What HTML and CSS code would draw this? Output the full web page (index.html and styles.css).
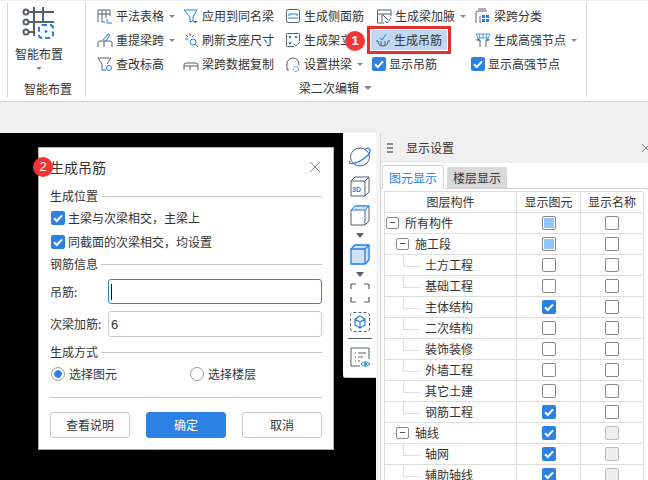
FILE: index.html
```html
<!DOCTYPE html>
<html lang="zh">
<head>
<meta charset="utf-8">
<title>生成吊筋</title>
<link rel="stylesheet" href="styles.css">
</head>
<body>
<svg class="defs" width="0" height="0">
  <symbol id="tick" viewBox="0 0 14 14"><path d="M3 7.2l2.8 2.8L11 4.4" fill="none" stroke="#fff" stroke-width="2"/></symbol>
</svg>
<header class="ribbon">
  <section class="group-large">
    <svg class="large-icon" width="34" height="36" viewBox="0 0 34 36">
      <g fill="none" stroke="#565e6c" stroke-width="2">
        <path d="M4 6h28M4 16h28M4 26h8M12 1v29M21 1v15"/>
      </g>
      <g fill="#fff" stroke="#565e6c" stroke-width="2"><circle cx="4" cy="6" r="2.500"/><circle cx="4" cy="16" r="2.500"/><circle cx="4" cy="26" r="2.500"/></g>
      <rect x="17" y="19" width="14" height="13" rx="3" fill="#fff" stroke="#1e7fea" stroke-width="2" stroke-dasharray="5 3"/>
      <circle cx="24" cy="25.500" r="1.400" fill="#1e7fea"/>
    </svg>
    <div class="large-name">智能布置</div>
    <i class="caret caret-center"></i>
    <div class="group-label">智能布置</div>
  </section>
  <section class="group-main">
    <div class="cols">
      <div class="col c1">
        <div class="item"><svg class="ic" viewBox="0 0 16 16"><path d="M1 14V2h12v6M1 6h12M5 2v12h3M9 2v8" fill="none" stroke="#565e6c"/><path d="M10 15h5M10 11v4" fill="none" stroke="#1e7fea"/></svg><span>平法表格</span><i class="caret"></i></div>
        <div class="item"><svg class="ic" viewBox="0 0 16 16"><path d="M1 15v-4q0-2 2-2h10q2 0 2 2v4M7 9v6" fill="none" stroke="#565e6c"/><path d="M6 8l5-6 2 1-4 6" fill="none" stroke="#1e7fea"/></svg><span>重提梁跨</span><i class="caret"></i></div>
        <div class="item"><svg class="ic" viewBox="0 0 16 16"><path d="M1 2h13l-4 6M1 2l4 6v6h4" fill="none" stroke="#565e6c"/><circle cx="12" cy="12" r="2.500" fill="none" stroke="#1e7fea"/></svg><span>查改标高</span></div>
      </div>
      <div class="col c2">
        <div class="item"><svg class="ic" viewBox="0 0 16 16"><path d="M1 2h13l-4 7v4l-3 1V9z" fill="none" stroke="#1e7fea"/><path d="M10 13h5l-2.500 2z" fill="#565e6c"/></svg><span>应用到同名梁</span></div>
        <div class="item"><svg class="ic" viewBox="0 0 16 16"><path d="M2 7h3M7 1v3M3 3l2 2M11 3L9 5" fill="none" stroke="#565e6c"/><circle cx="10" cy="10" r="3" fill="none" stroke="#1e7fea"/><path d="M12 12l3 3" stroke="#1e7fea"/></svg><span>刷新支座尺寸</span></div>
        <div class="item"><svg class="ic" viewBox="0 0 16 16"><path d="M1 14v-5M15 14V9M1 9q0-2 2-2h10q2 0 2 2M1 10h14M7 10v4" fill="none" stroke="#565e6c"/></svg><span>梁跨数据复制</span></div>
      </div>
      <div class="col c3">
        <div class="item"><svg class="ic" viewBox="0 0 16 16"><rect x="1.500" y="1.500" width="13" height="13" rx="2" fill="none" stroke="#565e6c"/><path d="M4 8V6h8v2M3 10h10" fill="none" stroke="#1e7fea"/></svg><span>生成侧面筋</span></div>
        <div class="item"><svg class="ic" viewBox="0 0 16 16"><path d="M9 14.500H2.500q-1 0-1-1v-11q0-1 1-1h11q1 0 1 1V9" fill="none" stroke="#565e6c"/><g fill="#1e7fea"><circle cx="5" cy="5" r="1.200"/><circle cx="11" cy="5" r="1.200"/><circle cx="5" cy="11" r="1.200"/></g><path d="M9 12l2 2 4-4" fill="none" stroke="#1e7fea"/></svg><span>生成架立筋</span></div>
        <div class="item"><svg class="ic" viewBox="0 0 16 16"><path d="M2 14V8a6 6 0 0 1 12 0v1M2 14h2" fill="none" stroke="#565e6c"/><circle cx="11" cy="13" r="2.500" fill="none" stroke="#1e7fea" stroke-dasharray="2 1"/></svg><span>设置拱梁</span><i class="caret"></i></div>
      </div>
      <div class="col c4">
        <div class="item"><svg class="ic" viewBox="0 0 16 16"><path d="M8 15H1.500V2H15v6M1.500 6H15M6 6v8" fill="none" stroke="#565e6c"/><path d="M9 13l2 2 4-5" fill="none" stroke="#1e7fea"/><path d="M7 7l5 5" stroke="#565e6c"/></svg><span>生成梁加腋</span><i class="caret"></i></div>
        <div class="hilite">
          <div class="hilite-inner"><svg class="ic" viewBox="0 0 16 16"><path d="M1 9h2q0 5 5 5t5-5h2M6 14V9M10 14V9" fill="none" stroke="#565e6c"/><path d="M5 6l2 2 4-6" fill="none" stroke="#1e7fea"/></svg><span>生成吊筋</span></div>
        </div>
        <div class="item check-item"><svg class="cb"><use href="#tick"/></svg><span>显示吊筋</span></div>
      </div>
      <div class="col c5">
        <div class="item"><svg class="ic" viewBox="0 0 16 16"><path d="M1 15V5q0-2 2-2h9M3 1h8M5 8v7" fill="none" stroke="#565e6c"/><g fill="#1e7fea"><rect x="7" y="7" width="3" height="3"/><rect x="11" y="7" width="3" height="3"/><rect x="7" y="11" width="3" height="3"/><rect x="11" y="11" width="3" height="3"/></g></svg><span>梁跨分类</span></div>
        <div class="item"><svg class="ic" viewBox="0 0 16 16"><path d="M3 6v2h2v7M13 6v2h-2v7M1 8h4M11 8h4" fill="none" stroke="#565e6c"/><path d="M1 2h14l-2 4H3zM4 2l1 4M8 2v4M12 2l-1 4" fill="none" stroke="#1e7fea" stroke-width=".8"/></svg><span>生成高强节点</span><i class="caret"></i></div>
        <div class="item check-item"><svg class="cb"><use href="#tick"/></svg><span>显示高强节点</span></div>
      </div>
    </div>
    <div class="group-label main-label">梁二次编辑<i class="caret caret-wide"></i></div>
    <b class="badge badge-one">1</b>
  </section>
</header>
<div class="band"></div>
<main class="workspace">
  <div class="canvas">
    <section class="dialog">
      <b class="badge badge-two">2</b>
      <div class="dlg-title"><span>生成吊筋</span><svg class="dlg-close" width="12" height="12" viewBox="0 0 12 12"><path d="M1 1l10 10M11 1L1 11" stroke="#888" fill="none"/></svg></div>
      <div class="legend"><span>生成位置</span></div>
      <label class="dlg-check"><svg class="cb"><use href="#tick"/></svg>主梁与次梁相交，主梁上</label>
      <label class="dlg-check"><svg class="cb"><use href="#tick"/></svg>同截面的次梁相交，均设置</label>
      <div class="legend"><span>钢筋信息</span></div>
      <div class="field first-field"><span class="field-name">吊筋:</span><div class="input focus"><i class="cursor"></i></div></div>
      <div class="field"><span class="field-name">次梁加筋:</span><div class="input">6</div></div>
      <div class="legend legend-mode"><span>生成方式</span></div>
      <div class="radios">
        <div class="radio-item"><i class="radio on"></i>选择图元</div>
        <div class="radio-item"><i class="radio"></i>选择楼层</div>
      </div>
      <div class="rule"></div>
      <div class="buttons">
        <div class="btn">查看说明</div>
        <div class="btn primary">确定</div>
        <div class="btn">取消</div>
      </div>
    </section>
    <nav class="tools">
      <svg width="24" height="22" viewBox="0 0 24 22"><ellipse cx="12" cy="11" rx="9.500" ry="9" fill="#fff" stroke="#565e6c"/><path d="M2 15C0 19 6 18 12 15s11-8 10-11c-.5-2-3-2-5-1" fill="none" stroke="#1e7fea" stroke-width="1.300"/></svg>
      <svg width="22" height="22" viewBox="0 0 22 22"><path d="M2 6l4-4h14v15l-4 4H2zM2 6h14v15M16 6l4-4" fill="none" stroke="#565e6c"/><text x="3" y="17" class="svg-3d">3D</text></svg>
      <svg width="22" height="22" viewBox="0 0 22 22"><path d="M2 6l4-4h14v15l-4 4H2zM16 6v15" fill="none" stroke="#565e6c"/><path d="M2 6l4-4h14l-4 4z" fill="#cfe2f8" stroke="#1e7fea"/></svg>
      <i class="tool-caret"></i>
      <svg width="22" height="22" viewBox="0 0 22 22"><path d="M2 6l4-4h14v15l-4 4H2z" fill="#cfe2f8" stroke="#1e7fea" stroke-width="1.300"/><path d="M2 6h14v15M16 6l4-4" fill="none" stroke="#1e7fea" stroke-width="1.300"/></svg>
      <i class="tool-caret"></i>
      <svg width="22" height="22" viewBox="0 0 22 22"><path d="M2 7V3q0-1 1-1h4M15 2h4q1 0 1 1v4M20 15v4q0 1-1 1h-4M7 20H3q-1 0-1-1v-4" fill="none" stroke="#565e6c" stroke-width="1.200"/></svg>
      <svg width="22" height="22" viewBox="0 0 22 22"><rect x="1.500" y="1.500" width="19" height="19" rx="3" fill="none" stroke="#565e6c" stroke-dasharray="3 2"/><path d="M11 5l5 3v6l-5 3-5-3V8zM6 8l5 3 5-3M11 11v6" fill="none" stroke="#1e7fea" stroke-width="1.200"/></svg>
      <hr class="tool-rule">
      <svg width="22" height="22" viewBox="0 0 22 22"><path d="M11 20H2V2h18v11" fill="none" stroke="#565e6c"/><path d="M6 7h1M9 7h8M6 11h1M9 11h5M6 15h1M9 15h2" stroke="#565e6c"/><path d="M12 18q4.500-4.500 9 0q-4.500 4.500-9 0z" fill="#fff" stroke="#1e7fea"/><circle cx="16.500" cy="18" r="1.500" fill="#1e7fea"/></svg>
    </nav>
  </div>
  <aside class="side">
    <div class="panel">
      <div class="panel-head">
        <i class="grip"></i><span class="panel-title">显示设置</span>
        <svg class="panel-close" width="10" height="10" viewBox="0 0 10 10"><path d="M1 1l8 8M9 1L1 9" stroke="#888" fill="none"/></svg>
      </div>
      <div class="tabs"><div class="tab active">图元显示</div><div class="tab">楼层显示</div></div>
      <div class="grid">
        <div class="row head"><div class="cell">图层构件</div><div class="cell">显示图元</div><div class="cell">显示名称</div></div>
        <div class="row"><div class="cell tree"><i class="minus"></i>所有构件</div><div class="cell"><i class="box part"></i></div><div class="cell"><i class="box"></i></div></div>
        <div class="row"><div class="cell tree l1"><i class="minus"></i>施工段</div><div class="cell"><i class="box part"></i></div><div class="cell"><i class="box"></i></div></div>
        <div class="row"><div class="cell tree l2">土方工程</div><div class="cell"><i class="box"></i></div><div class="cell"><i class="box"></i></div></div>
        <div class="row"><div class="cell tree l2">基础工程</div><div class="cell"><i class="box"></i></div><div class="cell"><i class="box"></i></div></div>
        <div class="row"><div class="cell tree l2">主体结构</div><div class="cell"><svg class="cb"><use href="#tick"/></svg></div><div class="cell"><i class="box"></i></div></div>
        <div class="row"><div class="cell tree l2">二次结构</div><div class="cell"><i class="box"></i></div><div class="cell"><i class="box"></i></div></div>
        <div class="row"><div class="cell tree l2">装饰装修</div><div class="cell"><i class="box"></i></div><div class="cell"><i class="box"></i></div></div>
        <div class="row"><div class="cell tree l2">外墙工程</div><div class="cell"><i class="box"></i></div><div class="cell"><i class="box"></i></div></div>
        <div class="row"><div class="cell tree l2">其它土建</div><div class="cell"><i class="box"></i></div><div class="cell"><i class="box"></i></div></div>
        <div class="row"><div class="cell tree l2 last">钢筋工程</div><div class="cell"><svg class="cb"><use href="#tick"/></svg></div><div class="cell"><i class="box"></i></div></div>
        <div class="row"><div class="cell tree l1"><i class="minus"></i>轴线</div><div class="cell"><svg class="cb"><use href="#tick"/></svg></div><div class="cell"><i class="box off"></i></div></div>
        <div class="row"><div class="cell tree l2">轴网</div><div class="cell"><svg class="cb"><use href="#tick"/></svg></div><div class="cell"><i class="box off"></i></div></div>
        <div class="row"><div class="cell tree l2 last">辅助轴线</div><div class="cell"><svg class="cb"><use href="#tick"/></svg></div><div class="cell"><i class="box off"></i></div></div>
      </div>
    </div>
  </aside>
</main>
</body>
</html>
```

FILE: styles.css
```css
* { box-sizing: border-box; }
html, body { margin: 0; height: 100%; }
body {
  width: 648px; height: 480px; overflow: hidden;
  display: flex; flex-direction: column;
  background: #000; color: #333;
  font: 12px/1 "Noto Sans CJK SC", "Noto Sans", sans-serif;
}
i { display: block; font-style: normal; }
.defs { position: absolute; }

/* ribbon */
.ribbon {
  height: 102px; flex: none; display: flex;
  background: #fff; border-top: 1px solid #f0f0f0; border-bottom: 1px solid #d6d6d6;
  padding-left: 7px;
}
.group-large {
  width: 79px; height: 94px; margin-top: 2px;
  border-left: 1px solid #d8d8d8; border-right: 1px solid #d8d8d8;
  display: flex; flex-direction: column;
  position: relative;
}
.large-icon { margin: 3px 0 0 14px; }
.large-name { margin: 5px 0 0 7px; line-height: 14px; }
.group-label { line-height: 14px; }
.group-large .group-label { margin: 12px 0 0 16px; }
.caret { width: 0; height: 0; border: 3px solid transparent; border-top: 3px solid #888; border-bottom: 0; margin-left: 5px; }
.caret.caret-center { margin: 6px 0 0 28px; }
.group-main {
  width: 501px; height: 94px; margin-top: 2px; padding-left: 11px;
  border-right: 1px solid #d8d8d8;
  position: relative;
}
.cols { display: flex; height: 78px; padding-top: 1px; }
.col { display: flex; flex-direction: column; }
.c1 { width: 86px; }
.c2 { width: 102px; }
.c3 { width: 91px; }
.c4 { width: 99px; }
.item { height: 24px; display: flex; align-items: center; white-space: nowrap; }
.item > span, .hilite-inner > span { line-height: 14px; }
.ic { width: 16px; height: 16px; flex: none; margin-right: 3px; }
.cb { width: 14px; height: 14px; flex: none; background: #2e81e4; border-radius: 2px; display: block; }
.check-item { margin-left: -4px; }
.check-item .cb { margin-right: 3px; }
.hilite {
  height: 28px; width: 84px; margin: -2px 0 -2px -9px;
  border: 3px solid #e5302f; padding: 1px;
  display: flex;
}
.hilite-inner { flex: 1; background: #c0d8f2; border-radius: 2px; display: flex; align-items: center; padding-left: 4px; white-space: nowrap; }
.main-label { display: flex; align-items: center; margin-left: 202px; }
.caret-wide { border-width: 4px; border-top-color: #888; border-bottom: 0; margin-left: 5px; }
.badge {
  position: absolute; width: 20px; height: 20px; border-radius: 50%;
  background: #f43534; color: #fff; font: bold 13px/20px "Liberation Sans", sans-serif; text-align: center;
}
.badge-one { left: 259px; top: 28px; }
.badge-two { left: -6px; top: 9px; font-weight: normal; }

.band { height: 31px; flex: none; background: #f0f0f0; }

/* workspace */
.workspace { flex: 1; display: flex; min-height: 0; }
.canvas { width: 376px; flex: none; background: #000; position: relative; }
.dialog {
  position: absolute; left: 38px; top: 14px; width: 296px; height: 303px;
  background: #fff; border: 1px solid #b0b0b0;
  padding: 0 11px;
  display: flex; flex-direction: column;
}
.dlg-title { height: 40px; display: flex; align-items: center; justify-content: space-between; font-size: 14px; padding-bottom: 3px; flex: none; }
.dlg-close { margin-right: 1px; }
.legend { display: flex; align-items: center; gap: 3px; height: 16px; margin-bottom: 2px; flex: none; }
.legend::after { content: ""; flex: 1; height: 1px; background: #c8c8c8; }
.dlg-check { display: flex; align-items: center; gap: 3px; height: 24px; padding-left: 1px; flex: none; }
.dlg-check + .legend { margin-top: 2px; }
.field { display: flex; align-items: center; margin-top: 7px; flex: none; }
.first-field { margin-top: 5px; }
.field-name { width: 58px; flex: none; }
.input {
  width: 214px; height: 26px; border: 1px solid #c8c8c8; border-radius: 3px;
  display: flex; align-items: center; padding-left: 2px; font-family: "Liberation Sans", sans-serif; font-size: 13px;
}
.input.focus { border-color: #2e81e4; height: 25px; }
.cursor { width: 1px; height: 16px; background: #111; }
.legend-mode { margin-top: 7px; }
.radios { display: flex; height: 24px; align-items: center; padding-left: 1px; flex: none; }
.radio-item { display: flex; align-items: center; gap: 4px; width: 139px; flex: none; }
.radio { width: 14px; height: 14px; border-radius: 50%; border: 1px solid #999; background: #fff; flex: none; }
.radio.on { background: radial-gradient(circle, #2e81e4 0 3.500px, #fff 4px); }
.rule { height: 1px; background: #c8c8c8; margin-top: 11px; flex: none; }
.buttons { display: flex; justify-content: space-between; margin-top: 14px; flex: none; }
.btn { width: 80px; height: 26px; border: 1px solid #c8c8c8; border-radius: 3px; display: flex; align-items: center; justify-content: center; }
.btn.primary { background: #2e81e4; border-color: #2e81e4; color: #fff; }

.tools {
  position: absolute; left: 343px; top: 0; width: 33px; height: 245px;
  background: #fff; border-radius: 0 0 0 3px; border-bottom: 1px solid #ccc;
  display: flex; flex-direction: column; align-items: center; padding-top: 13px;
}
.tools svg { flex: none; margin-bottom: 7px; }
.svg-3d { font: bold 7px "Liberation Sans", sans-serif; fill: #1e7fea; }
.tool-caret { width: 0; height: 0; border: 4px solid transparent; border-top: 5px solid #565e6c; border-bottom: 0; margin-bottom: 5px; flex: none; }
.tool-rule { width: 24px; height: 1px; margin: -2px 0 7px; border: 0; background: #565e6c; flex: none; }

/* side panel */
.side { flex: 1; background: #f4f4f4; padding-left: 4px; min-width: 0; }
.panel { height: 100%; background: #fff; border-left: 1px solid #d4d4d4; overflow: hidden; }
.panel-head { height: 30px; background: #f0f0f0; display: flex; align-items: center; padding-left: 6px; position: relative; }
.grip {
  width: 6px; height: 12px; margin-right: 13px;
  background: radial-gradient(circle, #888 0 1.200px, transparent 1.500px) 0 0 / 3px 4px;
}
.panel-title { line-height: 14px; }
.panel-close { position: absolute; left: 260px; top: 10px; }
.tabs { display: flex; height: 26px; gap: 3px; padding: 2px 0 0 1px; border-bottom: 1px solid #d4d4d4; align-items: flex-end; }
.tab { width: 60px; height: 21px; background: #d8d8d8; border-radius: 3px 3px 0 0; display: flex; align-items: center; justify-content: center; }
.tab.active { width: 62px; height: 24px; background: #fff; color: #2e81e4; border: 1px solid #d4d4d4; border-bottom: 0; margin-bottom: -1px; }
.grid { margin: 2px 0 0 3px; width: 259px; border-top: 1px solid #ddd; border-left: 1px solid #ddd; }
.row { display: grid; grid-template-columns: 132px 64px 63px; height: 21px; }
.cell {
  border-right: 1px solid #ddd; border-bottom: 1px solid #ddd;
  display: flex; align-items: center; justify-content: center; position: relative; white-space: nowrap;
}
.cell > .cb { width: 14px; height: 14px; }
.tree { justify-content: flex-start; padding-left: 1px; }
.tree.l1 { padding-left: 11px; }
.tree.l2 { padding-left: 40px; }
.minus { width: 13px; height: 12px; border: 1px solid #8a8a8a; border-radius: 2px; margin-right: 6px; position: relative; flex: none; }
.minus::after { content: ""; position: absolute; left: 3px; top: 4px; width: 5px; height: 1px; background: #555; }
.l1::before { content: ""; position: absolute; left: 8px; top: 10px; width: 3px; height: 1px; background: #ddd; }
.l2::before { content: ""; position: absolute; left: 18px; top: -1px; width: 16px; height: 12px; border-left: 1px solid #ddd; border-bottom: 1px solid #ddd; }
.box { width: 14px; height: 14px; border: 1px solid #888; border-radius: 2px; background: #fff; }
.box.part { background: #8fc3ff; box-shadow: inset 0 0 0 1px #fff; }
.box.off { background: #eee; border-color: #bbb; }
```
